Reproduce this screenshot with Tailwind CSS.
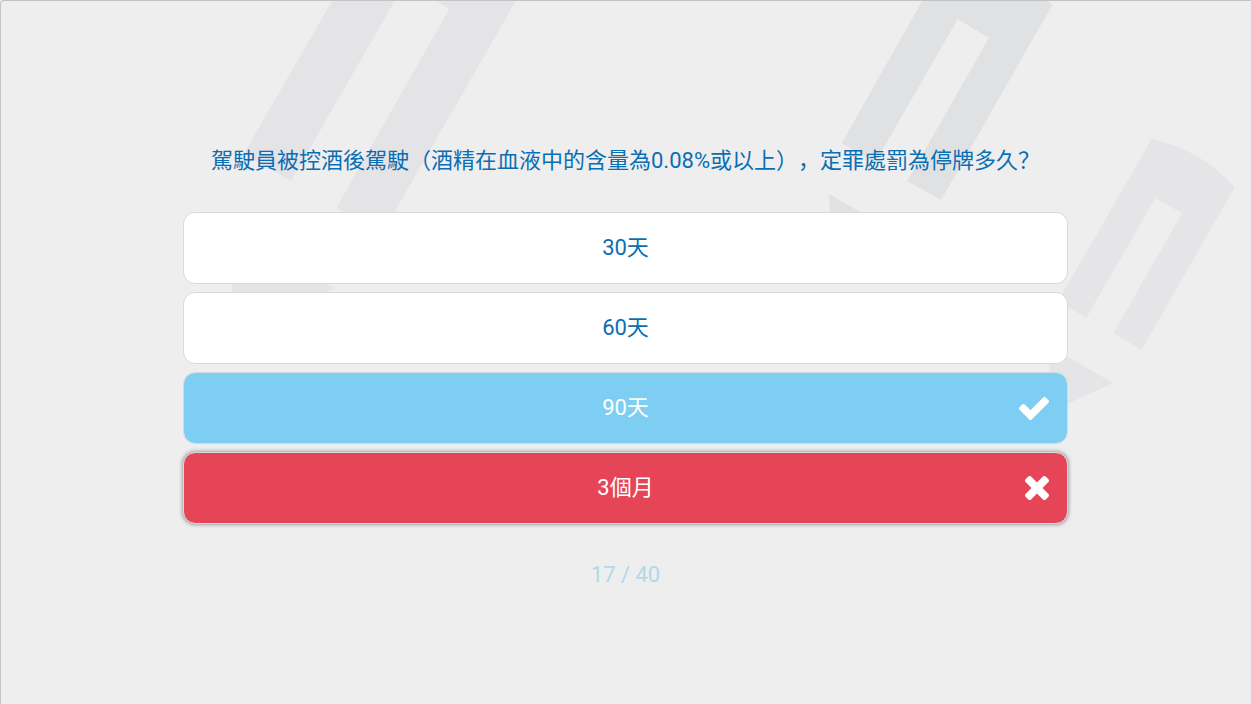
<!DOCTYPE html>
<html lang="zh-Hans">
<head>
<meta charset="utf-8">
<meta name="viewport" content="width=device-width, initial-scale=1">
<title>17 / 40</title>
<script src="https://cdn.jsdelivr.net/npm/@tailwindcss/browser@4"></script>
</head>
<body class="bg-[#eeeeee] font-[Roboto,'Noto_Sans_CJK_SC',sans-serif] text-[22px] leading-8 text-[#0a6eb4] [text-spacing-trim:space-all]">
<div class="relative isolate min-h-screen overflow-hidden rounded-tl-sm border-t border-l border-[#c3c3c5]">
  <!-- Pencil decorations -->
  <svg class="absolute -top-px -left-px -z-10 h-[704px] w-[1251px]" viewBox="0 0 1251 704" aria-hidden="true">
    <g fill="#e4e4e6">
      <path d="M332.7 0H395.3L291 181 243.8 153.7Z"/>
      <path d="M433.6 0H516.3L382 233.7 336.5 207.5 449.3 9Z"/>
      <path d="M231 229 334.5 288 232 345Z"/>
    </g>
    <g fill="#e0e1e3">
      <path d="M922.7 0H1047.3L1052.3 5 941 200 907.3 181 989 37.7 957.7 19.3 875 162.6 841.7 143.3Z"/>
      <path d="M829 194 900 235 833 270Z"/>
    </g>
    <g fill="#e5e5e7">
      <path d="M1151.7 139Q1200 149 1234.7 187.3L1141.7 349.7 1113.3 333.3 1182 213.3 1155.3 198.3 1086.3 317.7 1058 301.3Z"/>
      <path d="M1048 345 1113 383 1052 411Z"/>
    </g>
  </svg>

  <main class="mx-auto flex w-full max-w-[886px] flex-col pt-36 pr-px text-center">
    <h1 class="mb-[35px]">駕駛員被控酒後駕駛（酒精在血液中的含量為0.08%或以上），定罪處罰為停牌多久？</h1>
    <div class="flex flex-col gap-2">
      <button type="button" class="h-18 rounded-xl border border-[#dadada] bg-white">30天</button>
      <button type="button" class="h-18 rounded-xl border border-[#dadada] bg-white">60天</button>
      <button type="button" class="relative h-18 rounded-xl border border-[#d5dadd] bg-[#7ecef4] bg-clip-padding text-white">90天
        <svg class="absolute inset-y-0 right-[18px] my-auto h-[23px] w-[30px]" viewBox="121 334 1550 1188" fill="currentColor" aria-hidden="true"><path d="M1671 566q0 40-28 68l-724 724-136 136q-28 28-68 28t-68-28l-136-136-362-362q-28-28-28-68t28-68l136-136q28-28 68-28t68 28l294 295 656-657q28-28 68-28t68 28l136 136q28 28 28 68z"/></svg>
      </button>
      <button type="button" class="relative h-18 rounded-xl border border-[#dadada] bg-[#e64557] bg-clip-padding text-white shadow-[0_0_4px_#777]">3個月
        <svg class="absolute inset-y-0 right-[18px] my-auto size-6" viewBox="302 366 1188 1188" fill="currentColor" aria-hidden="true"><path d="M1490 1322q0 40-28 68l-136 136q-28 28-68 28t-68-28l-294-294-294 294q-28 28-68 28t-68-28l-136-136q-28-28-28-68t28-68l294-294-294-294q-28-28-28-68t28-68l136-136q28-28 68-28t68 28l294 294 294-294q28-28 68-28t68 28l136 136q28 28 28 68t-28 68l-294 294 294 294q28 28 28 68z"/></svg>
      </button>
    </div>
    <p class="mt-[35px] text-[#b4d7e8]">17 / 40</p>
  </main>
</div>
</body>
</html>
